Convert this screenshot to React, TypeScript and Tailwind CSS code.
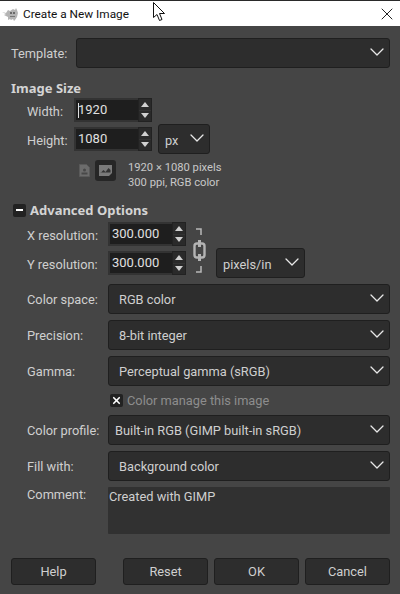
import { ChevronDown, X } from "lucide-react";
import type { ReactNode } from "react";

function Combo({ text, className = "", textClass = "pl-[10px] pt-[2px]" }: { text?: string; className?: string; textClass?: string }) {
  return (
    <div className={`h-[30px] flex items-center justify-between rounded-[3px] border border-[#1f1f1f] bg-[#2d2d2d] ${className}`}>
      <span className={`${textClass} whitespace-nowrap`}>{text}</span>
      <ChevronDown size={24} strokeWidth={1.3} className="text-[#e8e8e8] -mt-[3px] shrink-0" />
    </div>
  );
}

function Spin({ value, caret = false }: { value: string; caret?: boolean }) {
  return (
    <div className="h-[24px] w-[78px] flex bg-[#333] shrink-0">
      <div className="relative flex-1 m-[2px] mr-0 bg-[#1e1e1e] flex items-center pl-[2px] text-[13px] text-[#e0e0e0]">
        {caret && <div className="absolute left-[2px] top-[3px] h-[15px] w-px bg-[#e0e0e0]" />}
        {value}
      </div>
      <div className="w-[14px] flex flex-col gap-px bg-[#333] border border-[#222]">
        <div className="flex-1 bg-[#2a2a2a] flex items-center justify-center">
          <div className="w-0 h-0 border-x-[4px] border-x-transparent border-b-[5px] border-b-[#d0d0d0]" />
        </div>
        <div className="flex-1 bg-[#2a2a2a] flex items-center justify-center">
          <div className="w-0 h-0 border-x-[4px] border-x-transparent border-t-[5px] border-t-[#d0d0d0]" />
        </div>
      </div>
    </div>
  );
}

function Row({ label, children, className = "" }: { label: string; children: ReactNode; className?: string }) {
  return (
    <div className={`flex items-center pl-[17px] ${className}`}>
      <span className="w-[81px] shrink-0 whitespace-nowrap pt-[2px]">{label}</span>
      <div className="flex-1">{children}</div>
    </div>
  );
}

function Btn({ text, className = "" }: { text: string; className?: string }) {
  return (
    <div className={`h-[27px] w-[85px] flex items-center justify-center rounded-[3px] border border-[#1f1f1f] bg-[#2d2d2d] ${className}`}>
      {text}
    </div>
  );
}

function GimpIcon() {
  return (
    <svg width="17" height="14" viewBox="0 0 17 14" className="shrink-0">
      <path d="M0 5l4 1 2-3 2 1 3-2 2 1 1-2 1 2 1 3-1 4-2 3-1 1-1-2-2 1-1-1-2 1 0-3-2-1-2-1 2-1z" fill="#b4b4b4" />
      <rect x="8" y="5" width="2" height="2" fill="#6a6a6a" />
      <rect x="11" y="5" width="2" height="2" fill="#6a6a6a" />
      <rect x="8" y="9" width="5" height="1" fill="#777" />
    </svg>
  );
}

export default function App() {
  return (
    <div className="relative w-[400px] h-[594px] overflow-hidden bg-[#454545] text-[#cfcfcf] text-[12.8px] leading-[18px] font-['Roboto','Noto_Sans',sans-serif]">
      {/* title bar */}
      <div className="h-[26px] border-t border-[#2a2a2a] bg-white text-[#111] flex items-center pl-[2px] pr-[3px]">
        <GimpIcon />
        <span className="ml-[4px] text-[11.8px]">Create a New Image</span>
        <X size={20} strokeWidth={1.2} className="ml-auto text-[#222]" />
      </div>

      <div className="px-[10px]">
        <div className="mt-[12px] flex items-center pl-px">
          <span className="w-[65px] pt-[2px]">Template:</span>
          <Combo className="flex-1" />
        </div>

        <div className="mt-[11px] pl-px font-bold text-[13px] text-[#d4d4d4] font-['Noto_Sans']">Image Size</div>

        <div className="mt-[1px] flex items-center pl-[17px] h-[24px]">
          <span className="w-[47px] pt-[4px]">Width:</span>
          <Spin value="1920" caret />
        </div>
        <div className="mt-[2px] flex items-center pl-[17px] h-[30px]">
          <span className="w-[47px] pt-[4px]">Height:</span>
          <div className="flex items-center">
            <Spin value="1080" />
            <Combo text="px" textClass="pl-[6px] pt-[4px]" className="ml-[6px] w-[52px]" />
          </div>
        </div>

        <div className="mt-[3px] ml-[69px] flex items-center">
          <svg width="11" height="13" viewBox="0 0 11 13" className="shrink-0 mt-[-4px]">
            <path d="M0.5 0.5h7l3 3v9h-10z" fill="#6c6c6c" stroke="#5a5a5a" />
            <circle cx="5.5" cy="6" r="1.5" fill="#484848" />
            <rect x="2.5" y="8.5" width="6" height="2" fill="#484848" />
          </svg>
          <div className="ml-[5px] w-[21px] h-[21px] rounded-[3px] bg-[#262626] flex items-center justify-center mt-[-4px]">
            <svg width="13" height="11" viewBox="0 0 13 11">
              <path d="M0 0h13v8l-3 3h-10z" fill="#7a7a7a" />
              <path d="M1.5 8l3-3 2 2 3-4 2 2v2.5h-10z" fill="#333" />
            </svg>
          </div>
          <div className="ml-[12px] mt-[3px] -mb-[3px] text-[11.2px] leading-[15px] text-[#c8c8c8] whitespace-nowrap">
            <div>1920 × 1080 pixels</div>
            <div>300 ppi, RGB color</div>
          </div>
        </div>

        <div className="mt-[14px] flex items-center pl-[3px] h-[18px]">
          <div className="w-[13px] h-[13px] rounded-[2px] bg-[#222] flex items-center justify-center">
            <div className="w-[7px] h-[2px] bg-white" />
          </div>
          <span className="ml-[4px] font-bold text-[13px] text-[#d4d4d4] font-['Noto_Sans']">Advanced Options</span>
        </div>

        <div className="mt-[3px] flex pl-[17px]">
          <div className="w-[81px] shrink-0">
            <div className="h-[24px] flex items-center whitespace-nowrap pt-[4px]">X resolution:</div>
            <div className="mt-[5px] h-[24px] flex items-center whitespace-nowrap pt-[4px]">Y resolution:</div>
          </div>
          <div className="flex flex-col gap-[5px]">
            <Spin value="300.000" />
            <Spin value="300.000" />
          </div>
          <svg width="14" height="45" viewBox="0 0 14 45" className="ml-[7px] mt-[6px] shrink-0">
            <path d="M3 1h5v6M3 44h5v-6" fill="none" stroke="#b8b8b8" strokeWidth="1.5" />
            <rect x="1.5" y="15.5" width="10" height="14" rx="2.5" fill="none" stroke="#b4b4b4" strokeWidth="2.4" />
            <rect x="5" y="12" width="3" height="7" fill="#b4b4b4" />
            <rect x="5" y="26" width="3" height="7" fill="#b4b4b4" />
          </svg>
          <Combo text="pixels/in" textClass="pl-[6px] pt-[4px]" className="ml-[9px] mt-[26px] w-[89px]" />
        </div>

        <Row label="Color space:" className="mt-[6px]">
          <Combo text="RGB color" />
        </Row>
        <Row label="Precision:" className="mt-[6px]">
          <Combo text="8-bit integer" />
        </Row>
        <Row label="Gamma:" className="mt-[6px]">
          <Combo text="Perceptual gamma (sRGB)" />
        </Row>

        <div className="mt-[6px] ml-[100px] h-[17px] flex items-center text-[#8d8d8d]">
          <div className="w-[13px] h-[13px] rounded-[2px] bg-[#222] flex items-center justify-center">
            <X size={11} strokeWidth={3.6} className="text-white" />
          </div>
          <span className="ml-[4px]">Color manage this image</span>
        </div>

        <Row label="Color profile:" className="mt-[6px]">
          <Combo text="Built-in RGB (GIMP built-in sRGB)" textClass="pl-[6px] pt-[2px]" />
        </Row>
        <Row label="Fill with:" className="mt-[6px]">
          <Combo text="Background color" />
        </Row>

        <div className="mt-[6px] flex pl-[17px]">
          <span className="w-[81px] shrink-0 -mt-[1px]">Comment:</span>
          <div className="flex-1 h-[47px] bg-[#313131] rounded-[1px] pl-[1px] pt-[1px]">Created with GIMP</div>
        </div>

        <div className="mt-[24px] flex pl-px">
          <Btn text="Help" />
          <Btn text="Reset" className="ml-[27px]" />
          <Btn text="OK" className="ml-[6px]" />
          <Btn text="Cancel" className="ml-[6px]" />
        </div>
      </div>

      {/* mouse pointer over the title bar */}
      <svg width="14" height="20" viewBox="0 0 14 20" className="absolute left-[153px] top-[2px]">
        <path d="M0.5 0.5v15l3.5-3 2.5 6 2.5-1-2.5-6h5z" fill="#fff" stroke="#111" strokeWidth="1" />
      </svg>
    </div>
  );
}
